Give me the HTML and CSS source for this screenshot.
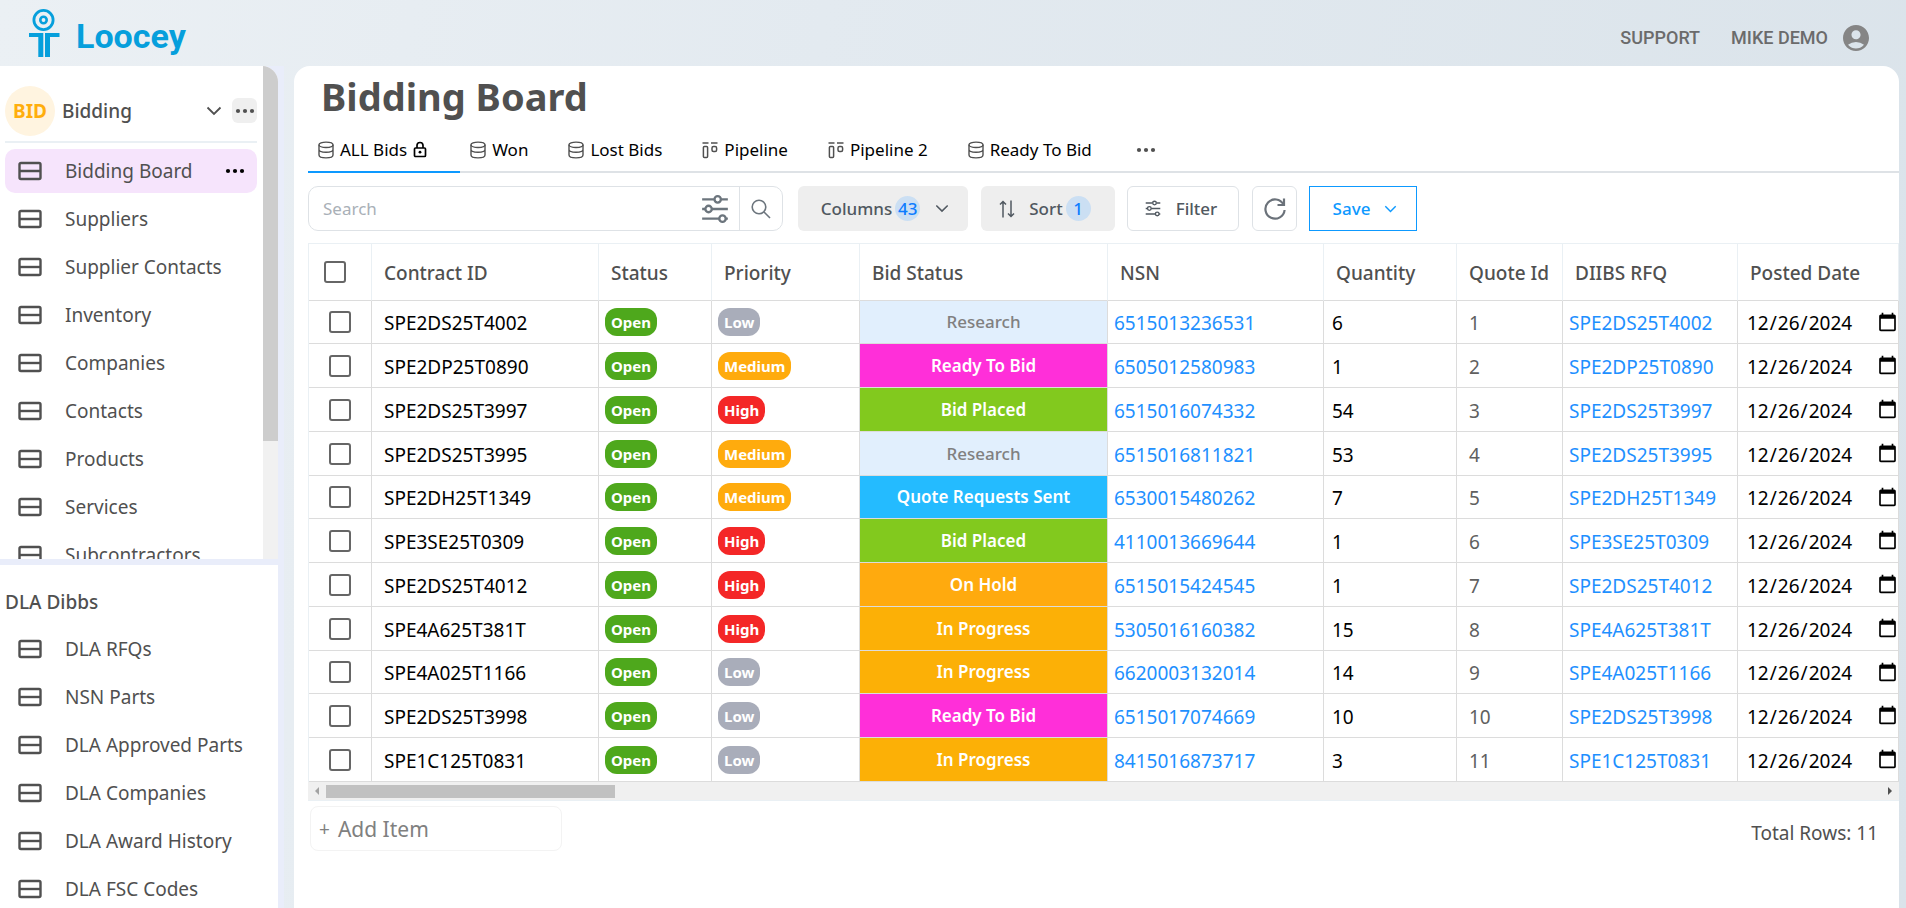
FILE: index.html
```html
<!DOCTYPE html>
<html lang="en">
<head>
<meta charset="utf-8">
<title>Loocey - Bidding Board</title>
<link rel="stylesheet" href="styles.css">
</head>
<body>
<svg class="sprite" aria-hidden="true">
  <symbol id="i-board" viewBox="0 0 24 20"><rect x="1.500" y="2" width="21" height="16" rx="1.500" fill="none" stroke="currentColor" stroke-width="2.400"/><path d="M2 10h20" stroke="currentColor" stroke-width="2.400"/></symbol>
  <symbol id="i-dots" viewBox="0 0 20 6"><g fill="currentColor"><circle cx="3" cy="3" r="2.100"/><circle cx="10" cy="3" r="2.100"/><circle cx="17" cy="3" r="2.100"/></g></symbol>
  <symbol id="i-chev" viewBox="0 0 16 10"><path d="M1.500 1.500L8 8l6.500-6.500" fill="none" stroke="currentColor" stroke-width="1.800"/></symbol>
  <symbol id="i-db" viewBox="0 0 16 18"><g fill="none" stroke="currentColor" stroke-width="1.400"><ellipse cx="8" cy="3.800" rx="7" ry="2.700"/><path d="M1 3.800v10.200c0 1.700 3 2.900 7 2.900s7-1.200 7-2.900V3.800M1 8.600c0 1.500 3 2.700 7 2.700s7-1.200 7-2.700"/></g></symbol>
  <symbol id="i-kanban" viewBox="0 0 16 18"><g fill="none" stroke="currentColor" stroke-width="1.500"><path d="M.5 2h6M9 2h6.500"/><rect x="1.400" y="5.500" width="4.200" height="11" rx="1"/><rect x="10" y="5.500" width="4.600" height="5" rx="1.500"/></g></symbol>
  <symbol id="i-sliders" viewBox="0 0 26 28"><g fill="none" stroke="currentColor" stroke-width="2.200"><path d="M1 5h11M19 5h6M1 14h3M10 14h15M1 23h16M23 23h2"/><circle cx="15.500" cy="5" r="3"/><circle cx="7" cy="14" r="3"/><circle cx="20" cy="23" r="3"/></g></symbol>
</svg>

<header class="topbar">
  <a class="brand" href="#">
    <svg class="brand-mark" viewBox="0 0 32 50" aria-hidden="true"><g fill="none" stroke="#069fdc"><circle cx="15.500" cy="12" r="9.600" stroke-width="2.800"/><circle cx="15.500" cy="12" r="3.200" stroke-width="2.600"/></g><path d="M1 25h14.300v24h-5V29H1zM17 25h14.500v4H22v20h-5z" fill="#069fdc"/></svg>
    <span>Loocey</span>
  </a>
  <nav class="account">
    <a href="#">SUPPORT</a>
    <a href="#">MIKE DEMO
      <svg width="26" height="26" viewBox="2 2 20 20" aria-hidden="true"><path fill="#858585" d="M12 2C6.480 2 2 6.480 2 12s4.480 10 10 10 10-4.480 10-10S17.520 2 12 2zm0 4c1.930 0 3.500 1.570 3.500 3.500S13.930 13 12 13s-3.500-1.570-3.500-3.500S10.070 6 12 6zm0 14c-2.030 0-4.430-.82-6.140-2.880a9.947 9.947 0 0 1 12.280 0C16.430 19.180 14.030 20 12 20z"/></svg>
    </a>
  </nav>
</header>

<div class="shell">
  <aside class="sidebar">
    <section class="panel panel-top">
      <div class="panel-body">
        <div class="workspace">
          <span class="avatar">BID</span>
          <span class="workspace-name">Bidding</span>
          <button class="bare" aria-label="Switch workspace"><svg width="16" height="10"><use href="#i-chev"/></svg></button>
          <button class="more" aria-label="Workspace options"><svg width="20" height="6"><use href="#i-dots"/></svg></button>
        </div>
        <nav class="menu">
          <a class="active" href="#"><svg><use href="#i-board"/></svg><span>Bidding Board</span><svg class="item-dots"><use href="#i-dots"/></svg></a>
          <a href="#"><svg><use href="#i-board"/></svg><span>Suppliers</span></a>
          <a href="#"><svg><use href="#i-board"/></svg><span>Supplier Contacts</span></a>
          <a href="#"><svg><use href="#i-board"/></svg><span>Inventory</span></a>
          <a href="#"><svg><use href="#i-board"/></svg><span>Companies</span></a>
          <a href="#"><svg><use href="#i-board"/></svg><span>Contacts</span></a>
          <a href="#"><svg><use href="#i-board"/></svg><span>Products</span></a>
          <a href="#"><svg><use href="#i-board"/></svg><span>Services</span></a>
          <a href="#"><svg><use href="#i-board"/></svg><span>Subcontractors</span></a>
        </nav>
      </div>
      <div class="vbar"><div class="vthumb"></div></div>
    </section>
    <section class="panel panel-bottom">
      <div class="panel-body">
        <h2>DLA Dibbs</h2>
        <nav class="menu">
          <a href="#"><svg><use href="#i-board"/></svg><span>DLA RFQs</span></a>
          <a href="#"><svg><use href="#i-board"/></svg><span>NSN Parts</span></a>
          <a href="#"><svg><use href="#i-board"/></svg><span>DLA Approved Parts</span></a>
          <a href="#"><svg><use href="#i-board"/></svg><span>DLA Companies</span></a>
          <a href="#"><svg><use href="#i-board"/></svg><span>DLA Award History</span></a>
          <a href="#"><svg><use href="#i-board"/></svg><span>DLA FSC Codes</span></a>
        </nav>
      </div>
    </section>
  </aside>

  <main class="board">
    <h1>Bidding Board</h1>
    <nav class="tabs">
      <a class="current" href="#"><svg><use href="#i-db"/></svg>ALL Bids<svg class="lock" viewBox="0 0 14 18"><g fill="none" stroke="#000" stroke-width="1.700"><rect x="1.500" y="7" width="11" height="8.500" rx="1"/><path d="M4 7V4.500a3 3 0 0 1 6 0V7"/></g><circle cx="7" cy="11.200" r="1.400"/></svg></a>
      <a href="#"><svg><use href="#i-db"/></svg>Won</a>
      <a href="#"><svg><use href="#i-db"/></svg>Lost Bids</a>
      <a href="#"><svg><use href="#i-kanban"/></svg>Pipeline</a>
      <a href="#"><svg><use href="#i-kanban"/></svg>Pipeline 2</a>
      <a href="#"><svg><use href="#i-db"/></svg>Ready To Bid</a>
      <button class="bare tab-more" aria-label="More views"><svg><use href="#i-dots"/></svg></button>
    </nav>

    <div class="toolbar">
      <div class="search">
        <input type="text" placeholder="Search" aria-label="Search">
        <button class="bare" aria-label="Search options"><svg width="28" height="30"><use href="#i-sliders"/></svg></button>
        <button class="bare go" aria-label="Run search"><svg width="20" height="20" viewBox="0 0 20 20" fill="none" stroke="currentColor" stroke-width="1.600"><circle cx="8" cy="8" r="6.800"/><path d="M13 13l6 6"/></svg></button>
      </div>
      <button class="btn soft columns">Columns<span class="count">43</span><svg width="14" height="9"><use href="#i-chev"/></svg></button>
      <button class="btn soft sort"><svg width="16" height="18" viewBox="0 0 16 18" fill="none" stroke="currentColor" stroke-width="1.500"><path d="M4 17.500V1.500M1 4.500l3-3 3 3M12 .5v16M9 13.500l3 3 3-3"/></svg>Sort<span class="count">1</span></button>
      <button class="btn line filter"><svg width="16" height="17"><use href="#i-sliders"/></svg>Filter</button>
      <button class="btn line refresh" aria-label="Refresh"><svg width="24" height="24" viewBox="0 0 24 24" fill="none" stroke="currentColor" stroke-width="2.200"><path d="M20.500 7.500A9.600 9.600 0 1 0 21.600 13"/><path d="M21 1.500v6.500h-6.500"/></svg></button>
      <button class="btn save">Save<svg width="13" height="8"><use href="#i-chev"/></svg></button>
    </div>

    <div class="grid">
      <table>
        <colgroup><col class="c-check"><col class="c-contract"><col class="c-status"><col class="c-priority"><col class="c-bid"><col class="c-nsn"><col class="c-qty"><col class="c-quote"><col class="c-rfq"><col></colgroup>
        <thead><tr><th class="check"><input type="checkbox" aria-label="Select all"></th><th>Contract ID</th><th>Status</th><th>Priority</th><th>Bid Status</th><th>NSN</th><th>Quantity</th><th>Quote Id</th><th>DIIBS RFQ</th><th>Posted Date</th></tr></thead>
        <tbody>
          <tr><td class="check"><input type="checkbox" aria-label="Select row 1"></td><td>SPE2DS25T4002</td><td class="tag"><span class="pill open">Open</span></td><td class="tag"><span class="pill low">Low</span></td><td class="bid research">Research</td><td class="link"><a href="#">6515013236531</a></td><td class="qty">6</td><td class="quote">1</td><td class="link"><a href="#">SPE2DS25T4002</a></td><td class="date"><input type="date" value="2024-12-26" aria-label="Posted date 1"></td></tr>
          <tr><td class="check"><input type="checkbox" aria-label="Select row 2"></td><td>SPE2DP25T0890</td><td class="tag"><span class="pill open">Open</span></td><td class="tag"><span class="pill medium">Medium</span></td><td class="bid ready">Ready To Bid</td><td class="link"><a href="#">6505012580983</a></td><td class="qty">1</td><td class="quote">2</td><td class="link"><a href="#">SPE2DP25T0890</a></td><td class="date"><input type="date" value="2024-12-26" aria-label="Posted date 2"></td></tr>
          <tr><td class="check"><input type="checkbox" aria-label="Select row 3"></td><td>SPE2DS25T3997</td><td class="tag"><span class="pill open">Open</span></td><td class="tag"><span class="pill high">High</span></td><td class="bid placed">Bid Placed</td><td class="link"><a href="#">6515016074332</a></td><td class="qty">54</td><td class="quote">3</td><td class="link"><a href="#">SPE2DS25T3997</a></td><td class="date"><input type="date" value="2024-12-26" aria-label="Posted date 3"></td></tr>
          <tr><td class="check"><input type="checkbox" aria-label="Select row 4"></td><td>SPE2DS25T3995</td><td class="tag"><span class="pill open">Open</span></td><td class="tag"><span class="pill medium">Medium</span></td><td class="bid research">Research</td><td class="link"><a href="#">6515016811821</a></td><td class="qty">53</td><td class="quote">4</td><td class="link"><a href="#">SPE2DS25T3995</a></td><td class="date"><input type="date" value="2024-12-26" aria-label="Posted date 4"></td></tr>
          <tr><td class="check"><input type="checkbox" aria-label="Select row 5"></td><td>SPE2DH25T1349</td><td class="tag"><span class="pill open">Open</span></td><td class="tag"><span class="pill medium">Medium</span></td><td class="bid sent">Quote Requests Sent</td><td class="link"><a href="#">6530015480262</a></td><td class="qty">7</td><td class="quote">5</td><td class="link"><a href="#">SPE2DH25T1349</a></td><td class="date"><input type="date" value="2024-12-26" aria-label="Posted date 5"></td></tr>
          <tr><td class="check"><input type="checkbox" aria-label="Select row 6"></td><td>SPE3SE25T0309</td><td class="tag"><span class="pill open">Open</span></td><td class="tag"><span class="pill high">High</span></td><td class="bid placed">Bid Placed</td><td class="link"><a href="#">4110013669644</a></td><td class="qty">1</td><td class="quote">6</td><td class="link"><a href="#">SPE3SE25T0309</a></td><td class="date"><input type="date" value="2024-12-26" aria-label="Posted date 6"></td></tr>
          <tr><td class="check"><input type="checkbox" aria-label="Select row 7"></td><td>SPE2DS25T4012</td><td class="tag"><span class="pill open">Open</span></td><td class="tag"><span class="pill high">High</span></td><td class="bid hold">On Hold</td><td class="link"><a href="#">6515015424545</a></td><td class="qty">1</td><td class="quote">7</td><td class="link"><a href="#">SPE2DS25T4012</a></td><td class="date"><input type="date" value="2024-12-26" aria-label="Posted date 7"></td></tr>
          <tr><td class="check"><input type="checkbox" aria-label="Select row 8"></td><td>SPE4A625T381T</td><td class="tag"><span class="pill open">Open</span></td><td class="tag"><span class="pill high">High</span></td><td class="bid progress">In Progress</td><td class="link"><a href="#">5305016160382</a></td><td class="qty">15</td><td class="quote">8</td><td class="link"><a href="#">SPE4A625T381T</a></td><td class="date"><input type="date" value="2024-12-26" aria-label="Posted date 8"></td></tr>
          <tr><td class="check"><input type="checkbox" aria-label="Select row 9"></td><td>SPE4A025T1166</td><td class="tag"><span class="pill open">Open</span></td><td class="tag"><span class="pill low">Low</span></td><td class="bid progress">In Progress</td><td class="link"><a href="#">6620003132014</a></td><td class="qty">14</td><td class="quote">9</td><td class="link"><a href="#">SPE4A025T1166</a></td><td class="date"><input type="date" value="2024-12-26" aria-label="Posted date 9"></td></tr>
          <tr><td class="check"><input type="checkbox" aria-label="Select row 10"></td><td>SPE2DS25T3998</td><td class="tag"><span class="pill open">Open</span></td><td class="tag"><span class="pill low">Low</span></td><td class="bid ready">Ready To Bid</td><td class="link"><a href="#">6515017074669</a></td><td class="qty">10</td><td class="quote">10</td><td class="link"><a href="#">SPE2DS25T3998</a></td><td class="date"><input type="date" value="2024-12-26" aria-label="Posted date 10"></td></tr>
          <tr><td class="check"><input type="checkbox" aria-label="Select row 11"></td><td>SPE1C125T0831</td><td class="tag"><span class="pill open">Open</span></td><td class="tag"><span class="pill low">Low</span></td><td class="bid progress">In Progress</td><td class="link"><a href="#">8415016873717</a></td><td class="qty">3</td><td class="quote">11</td><td class="link"><a href="#">SPE1C125T0831</a></td><td class="date"><input type="date" value="2024-12-26" aria-label="Posted date 11"></td></tr>
        </tbody>
      </table>
      <div class="hbar">
        <svg width="18" height="18" viewBox="0 0 18 18"><path d="M11 5v8L7 9z" fill="#a3a3a3"/></svg>
        <div class="htrack"><div class="hthumb"></div></div>
        <svg width="18" height="18" viewBox="0 0 18 18"><path d="M7 5v8l4-4z" fill="#505050"/></svg>
      </div>
    </div>

    <footer class="below">
      <button class="add"><span class="plus">+</span>Add Item</button>
      <span class="total">Total Rows: 11</span>
    </footer>
  </main>
</div>
</body>
</html>
```

FILE: styles.css
```css
* { box-sizing: border-box; }

body {
  margin: 0;
  height: 100vh;
  display: flex;
  flex-direction: column;
  overflow: hidden;
  background: linear-gradient(100deg, #ebf0f4 0%, #e3eaf0 40%, #dae3ea 100%);
  color: #505050;
  font-family: "Noto Sans", "Open Sans", sans-serif;
  font-size: 19px;
}

a { color: inherit; text-decoration: none; }
button, input { font: inherit; color: inherit; }
button { cursor: pointer; }
svg { display: block; flex: none; }
.sprite { position: absolute; width: 0; height: 0; }
.bare { border: 0; padding: 0; background: none; display: grid; place-items: center; }

/* Top bar */
.topbar {
  flex: none;
  height: 66px;
  display: flex;
  align-items: center;
  justify-content: space-between;
  padding: 0 37px 0 28px;
  font-family: Roboto, sans-serif;
  font-weight: 500;
}
.brand { display: flex; align-items: center; gap: 16px; color: #069fdc; font-size: 34px; font-weight: 700; }
.brand-mark { width: 32px; height: 50px; }
.brand span { padding-top: 6px; }
.account { display: flex; gap: 31px; padding-top: 9px; color: #6b6b6b; font-size: 18px; }
.account a { display: flex; align-items: center; gap: 15px; }

.shell { flex: 1; min-height: 0; display: flex; gap: 16px; padding-right: 7px; }

/* Sidebar */
.sidebar {
  flex: none;
  width: 278px;
  display: grid;
  grid-template-rows: 493fr 343fr;
  gap: 6px;
  background: #e9edfa;
  box-shadow: 6px 0 0 #e9edfa;
}
.panel { min-height: 0; overflow: hidden; display: flex; background: #fff; }
.panel-top { border-radius: 0 16px 0 0; }
.panel-body { flex: 1; min-width: 0; padding: 0 6px 0 5px; }
.vbar { flex: none; width: 15px; background: #f1f1f1; }
.vthumb { height: 76%; background: #cdcdcd; }

.workspace {
  display: flex;
  align-items: center;
  height: 77px;
  padding-top: 14px;
  border-bottom: 2px solid #eaf0f4;
}
.avatar {
  width: 50px;
  height: 50px;
  border-radius: 50%;
  display: grid;
  place-items: center;
  background: #fff4e0;
  color: #ffae0d;
  font-weight: 700;
}
.workspace-name { flex: 1; padding-left: 7px; font-weight: 500; }
.more { display: grid; place-items: center; width: 25px; height: 25px; margin-left: 10px; padding: 0; border: 0; border-radius: 6px; background: #efefef; }

.menu { display: flex; flex-direction: column; gap: 4px; padding-top: 6px; }
.menu a { flex: none; display: flex; align-items: center; height: 44px; padding: 0 12px 0 13px; gap: 23px; border-radius: 10px; }
.menu svg { width: 24px; height: 20px; }
.menu span { flex: 1; white-space: nowrap; }
.menu .active { background: #f6e4fc; }
.menu .item-dots { width: 20px; height: 6px; color: #000; }
h2 { margin: 0; padding-top: 23px; line-height: 28px; font-size: 19px; font-weight: 500; }
.panel-bottom .menu { padding-top: 11px; }

/* Main board */
.board {
  flex: 1;
  min-width: 0;
  background: #fff;
  border-radius: 16px 16px 0 0;
  padding-left: 14px;
  overflow: hidden;
}
h1 { margin: 0; padding: 0 0 2px 13px; font-size: 38px; line-height: 60px; font-weight: 700; }

.tabs { display: flex; height: 45px; border-bottom: 2px solid #dee2e6; color: #000; font-size: 17px; }
.tabs a { display: flex; align-items: center; gap: 6px; height: 45px; padding: 0 30px 2px 10px; white-space: nowrap; }
.tabs svg { width: 16px; height: 18px; color: #505050; }
.tabs .lock { width: 14px; height: 18px; }
.tabs .current { border-bottom: 2px solid #0d99ff; padding-bottom: 0; padding-right: 33px; }
.tabs .tab-more { padding-left: 14px; }
.tabs .tab-more svg { width: 20px; height: 6px; }

.toolbar { display: flex; align-items: stretch; height: 45px; margin-top: 13px; font-size: 17px; }
.search { width: 475px; display: flex; border: 1px solid #dee2e6; border-radius: 10px; color: #6c757d; margin-right: 15px; }
.search input { flex: 1; min-width: 0; border: 0; outline: 0; background: none; padding: 0 14px; }
.search input::placeholder { color: #a9b0b7; opacity: 1; }
.search .go { width: 43px; margin-left: 10px; border-left: 1px solid #dee2e6; }
.btn { display: flex; align-items: center; justify-content: center; padding: 0; border-radius: 6px; font-weight: 500; color: #505860; }
.soft { background: #eee; border: 0; }
.line { background: #fff; border: 1px solid #dee2e6; }
.count { display: grid; place-items: center; width: 25px; height: 25px; margin-left: 3px; border-radius: 50%; background: #cbdff3; color: #0d7cff; }
.columns { width: 170px; padding-left: 4px; margin-right: 13px; }
.columns svg { margin-left: 15px; }
.sort { width: 134px; padding-right: 6px; margin-right: 12px; }
.sort svg { margin-right: 14px; }
.filter { width: 112px; padding-right: 4px; gap: 15px; margin-right: 13px; }
.refresh { width: 45px; margin-right: 12px; color: #6b727a; }
.save { width: 108px; padding-left: 4px; gap: 14px; border: 1px solid #0d99ff; border-radius: 0; background: #fff; color: #0d99ff; }

/* Table */
.grid { margin-top: 12px; }
table { width: 100%; table-layout: fixed; border-collapse: separate; border-spacing: 0; border-top: 1px solid #eaf0f4; border-left: 1px solid #eaf0f4; }
.c-check { width: 63px; }
.c-contract { width: 227px; }
.c-status { width: 113px; }
.c-priority { width: 148px; }
.c-bid { width: 248px; }
.c-nsn { width: 216px; }
.c-qty { width: 133px; }
.c-quote { width: 106px; }
.c-rfq { width: 175px; }
th, td { border-right: 1px solid #dcdcdc; border-bottom: 1px solid #dcdcdc; text-align: left; white-space: nowrap; }
th { height: 57px; padding: 1px 0 0 12px; border-right-color: #eaf0f4; font-weight: 500; }
td { height: 44px; padding: 2px 0 0 12px; color: #000; line-height: 24px; overflow: hidden; }
tr:nth-child(4n+1) td { height: 43px; }
.check input { display: block; appearance: none; width: 22px; height: 22px; margin: 0; border: 2px solid #666; border-radius: 3px; }
td.check { padding: 0 0 0 20px; }
th.check { padding: 0 0 0 15px; }
td.tag { padding: 0 0 0 6px; }
.pill { display: block; width: max-content; padding: 0 6px; border-radius: 12px; line-height: 28px; font-size: 15px; font-weight: 700; color: #fff; }
.open { background: #4ea81c; }
.low { background: #a9adba; }
.medium { background: #ffab0d; }
.high { background: #f42727; }
td.bid { padding: 0; text-align: center; font-size: 17px; font-weight: 600; color: #fff; }
td.research { background: #e1effd; color: #808080; font-weight: 500; }
.ready { background: #ff2fd9; }
.placed { background: #82c91e; }
.sent { background: #24bbff; }
.hold { background: #ffaa0e; }
.progress { background: #fcb006; }
td.link { padding-left: 6px; color: #1e90ff; }
td.qty { padding-left: 8px; }
td.quote { color: #606060; }
td.date { padding: 2px 0 0 8px; }
td.date input { display: block; width: 100%; height: 28px; border: 0; padding: 0; background: none; }
td.date input::-webkit-calendar-picker-indicator { width: 21px; height: 21px; padding: 0; margin: 0 0 2px; }

.hbar { display: flex; align-items: center; height: 19px; background: #f0f0f0; border-bottom: 1px solid #eaf0f4; }
.htrack { flex: 1; }
.hthumb { width: 289px; max-width: 100%; height: 13px; background: #c1c1c1; }

.below { display: flex; align-items: center; justify-content: space-between; padding: 5px 21px 0 2px; }
.add { width: 252px; height: 45px; padding: 0 8px; display: flex; align-items: center; gap: 8px; border: 1px solid #f3f3f3; border-radius: 8px; background: #fff; color: #808080; font-size: 21px; }
.plus { font-size: 19px; }
.total { padding-top: 8px; }
```
